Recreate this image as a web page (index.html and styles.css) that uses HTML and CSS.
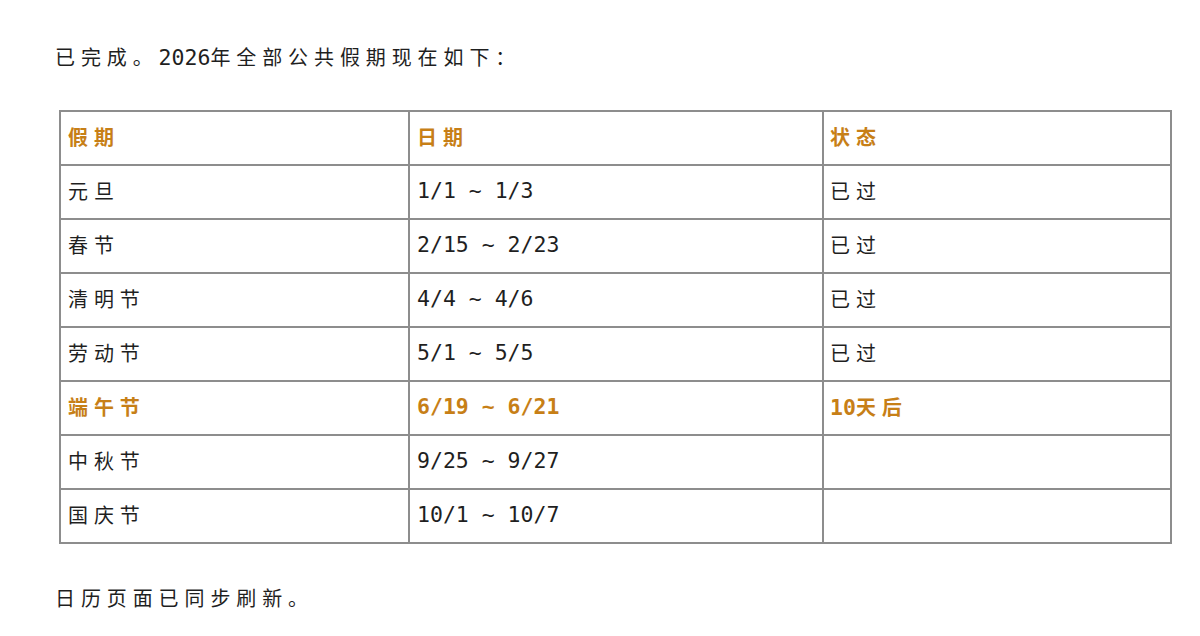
FILE: index.html
```html
<!DOCTYPE html>
<html lang="zh-CN">
<head>
<meta charset="utf-8">
<title>2026 公共假期</title>
<link rel="stylesheet" href="styles.css">
</head>
<body>
<main class="page">
  <p class="line"><span class="cjk">已完成。</span>2026<span class="cjk">年全部公共假期现在如下：</span></p>
  <table class="holidays">
    <colgroup>
      <col class="c1"><col class="c2"><col class="c3">
    </colgroup>
    <thead>
      <tr class="head">
        <th><span class="cjk">假期</span></th>
        <th><span class="cjk">日期</span></th>
        <th><span class="cjk">状态</span></th>
      </tr>
    </thead>
    <tbody>
      <tr><td><span class="cjk">元旦</span></td><td>1/1 ~ 1/3</td><td><span class="cjk">已过</span></td></tr>
      <tr><td><span class="cjk">春节</span></td><td>2/15 ~ 2/23</td><td><span class="cjk">已过</span></td></tr>
      <tr><td><span class="cjk">清明节</span></td><td>4/4 ~ 4/6</td><td><span class="cjk">已过</span></td></tr>
      <tr><td><span class="cjk">劳动节</span></td><td>5/1 ~ 5/5</td><td><span class="cjk">已过</span></td></tr>
      <tr class="hl"><td><span class="cjk">端午节</span></td><td>6/19 ~ 6/21</td><td>10<span class="cjk">天后</span></td></tr>
      <tr><td><span class="cjk">中秋节</span></td><td>9/25 ~ 9/27</td><td></td></tr>
      <tr><td><span class="cjk">国庆节</span></td><td>10/1 ~ 10/7</td><td></td></tr>
    </tbody>
  </table>
  <p class="line foot"><span class="cjk">日历页面已同步刷新。</span></p>
</main>
</body>
</html>
```

FILE: styles.css
```css
html, body {
  margin: 0;
  padding: 0;
  background: #ffffff;
}

body {
  font-family: "DejaVu Sans Mono", "Liberation Mono", "Noto Sans CJK SC", monospace;
  font-size: 21.5px;
  color: #1f1f1f;
}

.page {
  padding: 42px 0 0 55px;
}

.line {
  margin: 0;
  height: 30px;
  line-height: 30px;
  white-space: pre;
}

.cjk {
  font-family: "Noto Sans CJK SC", sans-serif;
  font-size: 20px;
  letter-spacing: 5.9px;
}

.holidays {
  margin: 38px 0 0 4px;
  width: 1113px;
  table-layout: fixed;
  border-collapse: collapse;
}

.c1 { width: 349px; }
.c2 { width: 414px; }
.c3 { width: 348px; }

.holidays th,
.holidays td {
  border: 2px solid #8d8d8d;
  height: 50px;
  padding: 0 0 2px 7px;
  text-align: left;
  vertical-align: middle;
  white-space: pre;
  font-weight: normal;
  line-height: 30px;
}

.holidays td:nth-child(3),
.holidays th:nth-child(3) {
  padding-left: 6px;
}

.holidays th,
.hl td {
  color: #c77f17;
  font-weight: bold;
}

.foot {
  margin-top: 39px;
}
```
